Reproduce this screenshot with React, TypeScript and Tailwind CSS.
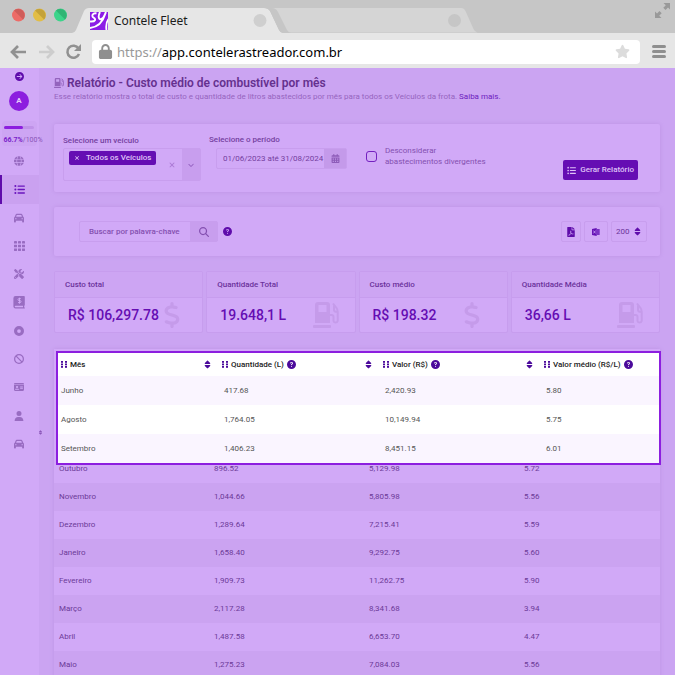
import type { ReactNode } from 'react';
import { FaFilePdf } from 'react-icons/fa';
import {
  FaBan,
  FaCalendarDays,
  FaCar,
  FaChevronDown,
  FaCircleArrowRight,
  FaCircleDot,
  FaCircleQuestion,
  FaDollarSign,
  FaGlobe,
  FaIdCard,
  FaListUl,
  FaLock,
  FaMagnifyingGlass,
  FaScrewdriverWrench,
  FaSort,
  FaStar,
  FaUser,
  FaXmark,
} from 'react-icons/fa6';

const PumpIcon = ({ size }: { size: number }) => (
  <svg width={size} height={size} viewBox="0 0 26 26">
    <path d="M5 0h9a3 3 0 0 1 3 3v18H2V3a3 3 0 0 1 3-3Zm.5 3v7h8V3Z" fill="currentColor" fillRule="evenodd" />
    <rect y="23" width="18" height="3" rx="1" fill="currentColor" />
    <path d="M17 13h1.500a2 2 0 0 1 2 2v4a2.200 2.200 0 0 0 4.200 0V9.500q0-2-1.500-4L20 1.500M21 3.500V8q0 2 3.500 2" fill="none" stroke="currentColor" strokeWidth="2" />
  </svg>
);

const GridIcon = () => (
  <svg width="11" height="10" viewBox="0 0 11 10" fill="currentColor">
    {[0, 4, 8].map((x) => [0, 3.700, 7.400].map((y) => <rect key={`${x}-${y}`} x={x} y={y} width="3" height="2.600" rx="0.4" />))}
  </svg>
);

const BookIcon = () => (
  <svg width="12" height="13" viewBox="0 0 12 13">
    <path d="M2.5 0H11a.8.8 0 0 1 .8.8v8.4l-.6.6v1.6h.6v1.2H2.4A2.2 2.2 0 0 1 .4 10.600V2.200A2.200 2.200 0 0 1 2.500 0Z" fill="currentColor" />
    <path d="M2.500 9.800h7.500v1.500H2.500a.75.75 0 0 1 0-1.500Z" fill="#d1a9f7" />
    <path d="M7.800 2.600H6a1 1 0 0 0 0 2h1a1 1 0 0 1 0 2H5M6.500 1.700v6" stroke="#d1a9f7" strokeWidth="0.900" fill="none" />
  </svg>
);

const GripIcon = () => (
  <svg width="6" height="7" viewBox="0 0 6 7" fill="#4b0a9b" className="shrink-0">
    {[0, 4].map((x) => [0, 2.5, 5].map((y) => <rect key={`${x}-${y}`} x={x} y={y} width="2" height="1.800" />))}
  </svg>
);

const ExcelIcon = () => (
  <svg width="8" height="8" viewBox="0 0 8 8">
    <path d="M0 1 4.700 0v8L0 7Z" fill="#6410b5" />
    <path d="M4 1h3.200a.5.5 0 0 1 .5.5v5a.5.5 0 0 1-.5.5H4Z" fill="#7b32c4" />
    <path d="m1.400 2.600 2.200 2.800M3.600 2.600 1.400 5.400" stroke="#d1a9f7" strokeWidth="0.800" />
  </svg>
);

const menu: { icon: ReactNode; label: string; active?: boolean }[] = [
  { icon: <FaGlobe size={10} />, label: 'Mapa' },
  { icon: <FaListUl size={11} />, label: 'Relatórios', active: true },
  { icon: <FaCar size={10} />, label: 'Veículos' },
  { icon: <GridIcon />, label: 'Painel' },
  { icon: <FaScrewdriverWrench size={10} />, label: 'Manutenção' },
  { icon: <BookIcon />, label: 'Financeiro' },
  { icon: <FaCircleDot size={10} />, label: 'Pneus' },
  { icon: <FaBan size={10} />, label: 'Multas' },
  { icon: <FaIdCard size={10} />, label: 'Motoristas' },
  { icon: <FaUser size={10} />, label: 'Usuários' },
  { icon: <FaCar size={10} />, label: 'Frota' },
];

const stats = [
  { title: 'Custo total', value: 'R$ 106,297.78', money: true },
  { title: 'Quantidade Total', value: '19.648,1 L', money: false },
  { title: 'Custo médio', value: 'R$ 198.32', money: true },
  { title: 'Quantidade Média', value: '36,66 L', money: false },
];

const columns = [
  { label: 'Mês', help: false },
  { label: 'Quantidade (L)', help: true },
  { label: 'Valor (R$)', help: true },
  { label: 'Valor médio (R$/L)', help: true },
];

const highlighted = [
  ['Junho', '417.68', '2,420.93', '5.80'],
  ['Agosto', '1,764.05', '10,149.94', '5.75'],
  ['Setembro', '1,406.23', '8,451.15', '6.01'],
];

const months = [
  ['Outubro', '896.52', '5,129.98', '5.72'],
  ['Novembro', '1,044.66', '5,805.98', '5.56'],
  ['Dezembro', '1,289.64', '7,215.41', '5.59'],
  ['Janeiro', '1,658.40', '9,292.75', '5.60'],
  ['Fevereiro', '1,909.73', '11,262.75', '5.90'],
  ['Março', '2,117.28', '8,341.68', '3.94'],
  ['Abril', '1,487.58', '6,653.70', '4.47'],
  ['Maio', '1,275.23', '7,084.03', '5.56'],
];

function BrowserBar() {
  return (
    <header className="relative h-[68px] shrink-0 bg-[#e6e6e6] font-['Noto_Sans',sans-serif]">
      <svg className="absolute inset-x-0 top-0 h-[33px] w-full" viewBox="0 0 675 33" preserveAspectRatio="xMinYMin slice">
        <rect width="675" height="33" fill="#c6c6c6" />
        <path d="M270 8H461q3 0 4.500 3l8 18q1.500 3 4 3.500H285Z" fill="#d5d5d5" />
        <path d="M72 33q3-.5 4-3L84 11q1.500-3 5-3H264q4 0 6 3l9 19q1 2.500 4 3Z" fill="#e6e6e6" />
        <path d="M264 8h8q4 0 6 4l9 18q1.500 2.500 4 3h-8q-3-.5-4-3l-9-19q-2-3-6-3Z" fill="#c6c6c6" />
        <g>
          <circle cx="18.500" cy="15" r="6.500" fill="#ed6b67" />
          <path d="M14 10.400A6.500 6.500 0 0 1 23.100 19.600Z" fill="#cf5d5a" />
          <circle cx="39.500" cy="15" r="6.500" fill="#e2bd45" />
          <path d="M35 10.400A6.500 6.500 0 0 1 44.100 19.600Z" fill="#c4a238" />
          <circle cx="60.500" cy="15" r="6.500" fill="#3cd48a" />
          <path d="M56 10.400A6.500 6.500 0 0 1 65.100 19.600Z" fill="#2fb574" />
        </g>
        <circle cx="260" cy="20.500" r="6.500" fill="#cfcfcf" />
        <circle cx="454.500" cy="20.500" r="6.500" fill="#c6c6c6" />
      </svg>
      <div className="relative flex h-[35px] items-center justify-between pt-[7px] pl-[90px]">
        <div className="flex items-center gap-[6px]">
          <svg width="18" height="18" viewBox="0 0 18 18">
            <rect width="18" height="18" fill="#8c1be6" />
            <path d="M6.500 1.500C3 .5 1 4 3.500 5.500S6 10 0 9.500M10 0C7.500 5 9 8 11.500 7S14.500 3 16 0M15 2.500C12.500 11 8 15 0 16M18.500 7Q15.500 11 16.500 18" stroke="#fff" strokeWidth="1.900" fill="none" />
          </svg>
          <span className="text-[12px] leading-4 text-[#1c1c1c]">Contele Fleet</span>
        </div>
        <svg width="16" height="16" viewBox="0 0 16 16" fill="#999" className="mr-1 mb-[20px]">
          <path d="M8.500 0H15v6.500l-2-2L10.500 7 8.300 4.800l2.500-2.500ZM0 15V8.500l2 2L4.500 8l2.200 2.200-2.500 2.500L6.500 15Z" />
        </svg>
      </div>
      <div className="flex h-[33px] items-center pr-[9px] pl-[10px]">
        <button aria-label="Voltar" className="w-[29px]">
          <svg width="16" height="14" viewBox="0 0 16 14" fill="none" stroke="#919191" strokeWidth="2.700"><path d="M8 1 2 7l6 6M2 7h14" /></svg>
        </button>
        <button aria-label="Avançar" className="w-[26px]">
          <svg width="16" height="14" viewBox="0 0 16 14" fill="none" stroke="#cdcdcd" strokeWidth="2.700"><path d="m8 1 6 6-6 6M14 7H0" /></svg>
        </button>
        <button aria-label="Recarregar" className="w-[27px]">
          <svg width="17" height="16" viewBox="0 0 17 16"><path d="M13.500 4.500A6 6 0 1 0 14 10" fill="none" stroke="#919191" strokeWidth="2.500" /><path d="M16 0v7H9Z" fill="#919191" /></svg>
        </button>
        <div className="flex h-6 flex-1 items-center rounded-[4px] bg-white pr-[10px] pl-[6px]">
          <FaLock size={15} className="text-[#8f8f8f]" />
          <span className="ml-1 flex-1 text-[13px] leading-5 text-black"><span className="text-[#999]">https://</span>app.contelerastreador.com.br</span>
          <FaStar size={15} className="text-[#dcdcdc]" />
        </div>
        <button aria-label="Menu" className="ml-3 flex w-[14px] flex-col gap-[2px]">
          <span className="h-[3px] w-full rounded-full bg-[#8f8f8f]" />
          <span className="h-[3px] w-full rounded-full bg-[#8f8f8f]" />
          <span className="h-[3px] w-full rounded-full bg-[#8f8f8f]" />
        </button>
      </div>
    </header>
  );
}

function Sidebar() {
  return (
    <aside className="relative flex w-[39px] shrink-0 flex-col items-center bg-[#d1a9f7] pt-1 pr-px">
      <button aria-label="Expandir menu" className="text-[#5f0cab]"><FaCircleArrowRight size={9} className="block" /></button>
      <div className="mt-[10px] flex size-5 items-center justify-center rounded-full bg-[#8c1edf] text-[8px] font-bold text-[#e5cbfa]">A</div>
      <div className="mt-[10px] h-[25px] w-[35px] rounded-[4px] bg-[#cda5f3] px-[2px] pt-[5px]">
        <div className="h-[3px] w-[30px] rounded-full bg-[#bf92e8]"><div className="h-full w-2/3 rounded-full bg-[#8c1edf]" /></div>
        <p className="mt-[6px] text-[7px] leading-[10px] whitespace-nowrap text-[#8a55b8]"><b className="text-[#7a1fca]">66.7%</b>/100%</p>
      </div>
      <nav className="mt-px grid h-[311px] w-full auto-rows-fr">
        {menu.map((item) => (
          <a
            key={item.label}
            href="#"
            aria-label={item.label}
            className={`flex items-center justify-center ${item.active ? '-mr-px border-l-2 border-[#5f0cab] bg-[#caa1f0] pr-[3px] text-[#6a14bd]' : 'text-[#996cc2]'}`}
          >
            {item.icon}
          </a>
        ))}
      </nav>
      <button aria-label="Redimensionar menu" className="absolute top-[362px] left-[38px] text-[#8a55b8]"><FaSort size={5} className="block" /></button>
    </aside>
  );
}

function Filters() {
  return (
    <section className="mt-[22px] flex h-[68px] items-start rounded-[2px] bg-[#d1a9f7] pl-[9px] shadow-[0_0_4px_#bd93e4]">
      <div className="mt-3 w-[138px]">
        <p className="text-[8px] leading-[10px] font-medium text-[#74409f]">Selecione um veículo</p>
        <div className="mt-[2px] flex h-[33px] rounded-[2px] border border-[#c89eee]">
          <div className="flex flex-1 items-start pt-[2px] pl-[5px]">
            <button className="flex h-[14px] items-center gap-[6px] rounded-[2px] bg-[#650db3] px-[5px] text-[8px] font-medium whitespace-nowrap text-[#dfc2f7]">
              <FaXmark size={6} />Todos os Veículos
            </button>
            <FaXmark size={8} className="mt-[10px] ml-3 text-[#ac7bd6]" />
          </div>
          <div className="flex w-[18px] items-center justify-center bg-[#c89eee]"><FaChevronDown size={6} className="text-[#8a55b8]" /></div>
        </div>
      </div>
      <div className="mt-[11px] ml-2 w-[138px]">
        <label htmlFor="period" className="block text-[8px] leading-[10px] font-medium text-[#74409f]">Selecione o período</label>
        <div className="mt-[3px] ml-[7px] flex h-[21px] rounded-[2px] border border-[#c89eee]">
          <input id="period" readOnly value="01/06/2023 até 31/08/2024" className="w-full min-w-0 flex-1 pl-[6px] text-[8px] text-[#74409f]" />
          <button aria-label="Calendário" className="flex w-[22px] shrink-0 items-center justify-center bg-[#c49aea] text-[#8d5cb8]"><FaCalendarDays size={9} /></button>
        </div>
      </div>
      <label className="mt-[21px] ml-[19px] flex items-center gap-2 text-[8px] leading-[11px] text-[#8450b0]">
        <input type="checkbox" className="size-[11px] shrink-0 appearance-none rounded-[3px] border border-[#7420c0]" />
        <span>Desconsiderar<br />abastecimentos divergentes</span>
      </label>
      <button className="mt-9 mr-[22px] ml-auto flex h-5 items-center gap-1 rounded-[2px] bg-[#650db3] px-1 text-[8px] font-medium whitespace-nowrap text-[#dfc2f7]">
        <FaListUl size={9} />Gerar Relatório
      </button>
    </section>
  );
}

function Toolbar() {
  return (
    <section className="mt-[15px] flex h-[49px] items-center rounded-[2px] bg-[#d1a9f7] pr-[13px] pl-[25px] shadow-[0_0_4px_#bd93e4]">
      <div className="flex h-[21px] w-[139px] rounded-[2px] border border-[#c89eee]">
        <input aria-label="Buscar" placeholder="Buscar por palavra-chave" className="min-w-0 flex-1 pl-[9px] text-[8px] font-medium placeholder:text-[#8450b0]" />
        <button aria-label="Pesquisar" className="flex w-[27px] items-center justify-center bg-[#c89eee] text-[#8450b0]"><FaMagnifyingGlass size={10} /></button>
      </div>
      <FaCircleQuestion size={9} className="ml-[5px] text-[#5f0cab]" />
      <div className="ml-auto flex gap-[3px]">
        <button aria-label="Exportar PDF" className="flex h-[21px] w-5 items-center justify-center rounded-[2px] border border-[#c89eee] text-[#5f0cab]"><FaFilePdf size={10} /></button>
        <button aria-label="Exportar Excel" className="flex h-[21px] w-6 items-center justify-center rounded-[2px] border border-[#c89eee]"><ExcelIcon /></button>
        <div className="flex h-[21px] w-9 items-center justify-between rounded-[2px] border border-[#c89eee] px-1">
          <select aria-label="Linhas por página" className="appearance-none text-[8px] text-[#6c349b]"><option>200</option></select>
          <FaSort size={9} className="text-[#5f0cab]" />
        </div>
      </div>
    </section>
  );
}

function Stats() {
  return (
    <section className="mt-[15px] grid grid-cols-4 gap-[3px]">
      {stats.map((stat) => (
        <div key={stat.title} className="rounded-[2px] border border-[#c79dee] bg-[#d1a9f7]">
          <h2 className="h-[26px] border-b border-[#c79dee] bg-[#cda5f3] pl-[10px] text-[8px] leading-[25px] font-medium text-[#6b329b]">{stat.title}</h2>
          <div className="flex h-[34px] items-center justify-between pl-[13px]">
            <p className="text-[14px] font-medium whitespace-nowrap text-[#650db3]">{stat.value}</p>
            {stat.money ? (
              <div className="mr-[22px] text-[#c59bea]"><FaDollarSign size={26} className="block" /></div>
            ) : (
              <div className="mr-4 text-[#c59bea]"><PumpIcon size={26} /></div>
            )}
          </div>
        </div>
      ))}
    </section>
  );
}

function HighlightTable() {
  return (
    <div className="relative z-10 -mr-px ml-[2px] border-2 border-[#8c1edf] bg-white">
      <table className="w-full table-fixed border-collapse text-[8px] leading-[10px] text-[#555]">
        <colgroup>
          <col className="w-[161px]" />
          <col className="w-[161px]" />
          <col className="w-[161px]" />
          <col />
        </colgroup>
        <thead>
          <tr className="h-[23px] text-[#222]">
            {columns.map((col, i) => (
              <th key={col.label} className="p-0 text-left font-medium">
                <div className="flex items-center gap-[3px] pl-[3px]">
                  <GripIcon />
                  <span className="whitespace-nowrap">{col.label}</span>
                  {col.help && <FaCircleQuestion size={9} className="shrink-0 text-[#4b0a9b]" />}
                  {i < 3 && <FaSort size={9} className="mr-[7px] ml-auto shrink-0 text-[#4b0a9b]" />}
                </div>
              </th>
            ))}
          </tr>
        </thead>
        <tbody>
          {highlighted.map((row) => (
            <tr key={row[0]} className="h-[29px] odd:bg-[#faf5ff]">
              {row.map((cell, i) => (
                <td key={i} className={i === 0 ? 'p-0 pl-[3px]' : 'p-0 pl-[5px]'}>{cell}</td>
              ))}
            </tr>
          ))}
        </tbody>
      </table>
    </div>
  );
}

function MonthsTable() {
  return (
    <table className="-mt-[10px] w-full table-fixed border-collapse text-[8px] leading-[10px] text-[#6c3a98]">
      <colgroup>
        <col className="w-[155px]" />
        <col className="w-[155px]" />
        <col className="w-[155px]" />
        <col />
      </colgroup>
      <tbody>
        {months.map((row) => (
          <tr key={row[0]} className="h-7 even:bg-[#cba3f1]">
            {row.map((cell, i) => (
              <td key={i} className="p-0 pl-[5px]">{cell}</td>
            ))}
          </tr>
        ))}
      </tbody>
    </table>
  );
}

export default function App() {
  return (
    <div className="flex h-screen flex-col overflow-hidden bg-[#cba4f2] font-[Roboto,sans-serif]">
      <BrowserBar />
      <div className="flex min-h-0 flex-1">
        <Sidebar />
        <main className="min-w-0 flex-1 px-[15px] pt-2">
          <h1 className="flex items-center gap-[3px] text-[12px] leading-[14px] font-semibold text-[#65318f]">
            <span className="text-[#9464bd]"><PumpIcon size={10} /></span>
            Relatório - Custo médio de combustível por mês
          </h1>
          <p className="mt-[2px] text-[8px] leading-[10px] whitespace-nowrap text-[#9665bf]">
            Esse relatório mostra o total de custo e quantidade de litros abastecidos por mês para todos os Veículos da frota.{' '}
            <a href="#" className="text-[#6d1bbe]">Saiba mais.</a>
          </p>
          <Filters />
          <Toolbar />
          <Stats />
          <section className="mt-4 bg-[#d1a9f7] pt-[2px] shadow-[0_0_4px_#bd93e4]">
            <HighlightTable />
            <MonthsTable />
          </section>
        </main>
      </div>
    </div>
  );
}
